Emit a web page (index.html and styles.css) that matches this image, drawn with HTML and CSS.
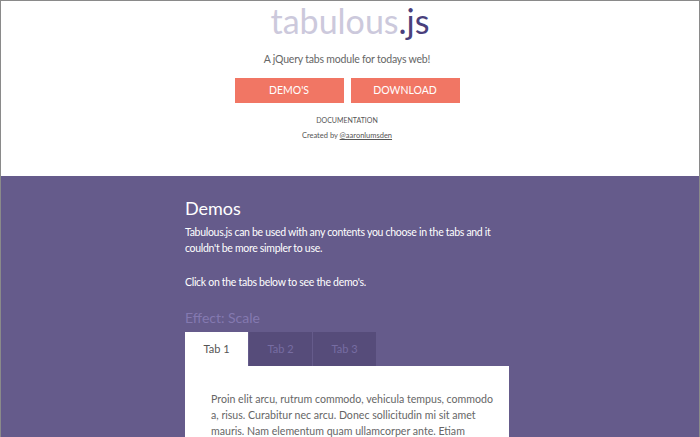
FILE: index.html
```html
<!DOCTYPE html>
<html lang="en">
<head>
  <meta charset="UTF-8">
  <meta name="viewport" content="width=device-width, initial-scale=1.0">
  <title>tabulous.js</title>
  <link rel="stylesheet" href="styles.css">
</head>
<body>
  <div class="page">
    <header class="intro">
      <h1 class="logo">tabulous<span class="logo-ext">.js</span></h1>
      <div class="intro-body">
        <p class="tagline">A jQuery tabs module for todays web!</p>
        <div class="actions">
          <a class="btn" href="#demos">Demo's</a>
          <a class="btn" href="#download">Download</a>
        </div>
        <a class="docs-link" href="#docs">Documentation</a>
        <p class="credit">Created by <a href="#twitter">@aaronlumsden</a></p>
      </div>
    </header>

    <section class="demos" id="demos">
      <div class="demos-inner">
        <h2>Demos</h2>
        <p>Tabulous.js can be used with any contents you choose in the tabs and it couldn't be more simpler to use.</p>
        <p>Click on the tabs below to see the demo's.</p>

        <h3 class="effect-title">Effect: Scale</h3>
        <div class="tabs">
          <ul class="tab-list">
            <li class="tab active">Tab 1</li>
            <li class="tab">Tab 2</li>
            <li class="tab">Tab 3</li>
          </ul>
          <div class="tab-panel">
            <p>Proin elit arcu, rutrum commodo, vehicula tempus, commodo a, risus. Curabitur nec arcu. Donec sollicitudin mi sit amet mauris. Nam elementum quam ullamcorper ante. Etiam aliquet massa et lorem.</p>
          </div>
        </div>
      </div>
    </section>
  </div>
</body>
</html>
```

FILE: styles.css
```css
html, body {
  margin: 0;
  padding: 0;
}
body {
  font-family: Lato, "Open Sans", sans-serif;
  background: #655b8b;
  overflow: hidden;
}
.page {
  height: 100vh;
  box-sizing: border-box;
  border: 1px solid #8a8a8a;
  border-bottom: none;
  overflow: hidden;
}
.intro {
  background: #fff;
  height: 175px;
  text-align: center;
}
.intro-body {
  padding-right: 6px;
}
.logo {
  margin: 0;
  font-size: 34px;
  line-height: 40px;
  font-weight: normal;
  color: #ccc9dc;
}
.logo-ext {
  color: #4a3f7c;
}
.tagline {
  margin: 10px 0 0;
  font-size: 10.5px;
  letter-spacing: -0.2px;
  line-height: 16px;
  color: #666;
}
.actions {
  display: flex;
  justify-content: center;
  gap: 7px;
  margin-top: 11px;
}
.btn {
  width: 109px;
  height: 25px;
  line-height: 25px;
  background: #f17664;
  color: #fff;
  text-transform: uppercase;
  text-decoration: none;
  font-size: 10.5px;
}
.docs-link {
  display: block;
  margin-top: 12px;
  font-size: 7px;
  line-height: 10px;
  color: #555;
  text-transform: uppercase;
  text-decoration: none;
}
.credit {
  margin: 6px 0 0;
  font-size: 7.5px;
  line-height: 10px;
  color: #555;
}
.credit a {
  color: #555;
}
.demos {
  color: #fff;
}
.demos-inner {
  width: 324px;
  margin-left: calc(50% - 165px);
  padding-top: 20px;
}
.demos h2 {
  margin: 0;
  font-size: 18px;
  line-height: 24px;
  font-weight: normal;
}
.demos p {
  margin: 4px 0 18px;
  font-size: 10.5px;
  letter-spacing: -0.3px;
  line-height: 16px;
}
.effect-title {
  margin: 16px 0 0;
  font-size: 14px;
  line-height: 20px;
  font-weight: normal;
  color: #8479b0;
}
.tabs {
  margin-top: 4px;
}
.tab-list {
  list-style: none;
  margin: 0;
  padding: 0;
  display: flex;
  gap: 1px;
}
.tab {
  width: 63px;
  height: 34px;
  line-height: 34px;
  text-align: center;
  font-size: 11px;
  background: #564c7a;
  color: #776da3;
}
.tab.active {
  background: #fff;
  color: #555;
}
.tab-panel {
  background: #fff;
  padding: 25px 12px 25px 26px;
}
.demos .tab-panel p {
  margin: 0;
  font-size: 10.6px;
  letter-spacing: 0;
  line-height: 16px;
  color: #666;
}
```
